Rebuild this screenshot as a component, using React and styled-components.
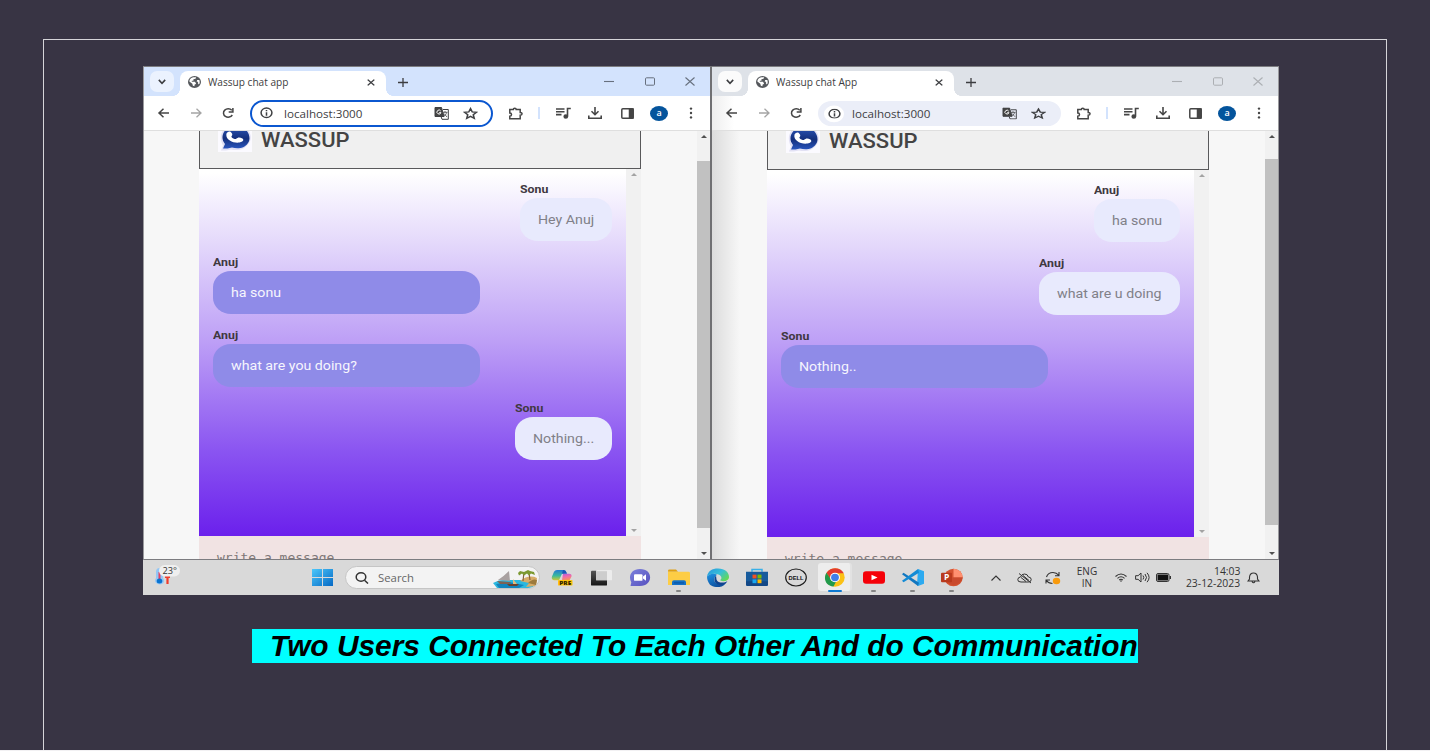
import React from 'react';
import styled, { createGlobalStyle } from 'styled-components';

const Global = createGlobalStyle`
  * { box-sizing: border-box; }
  body { margin: 0; background: #f2f1f3; overflow: hidden; }
`;

const Slide = styled.main`
  width: 1430px;
  height: 750px;
  padding: 39px 43px 0;
  background: #383444;
  overflow: hidden;
`;
const Frame = styled.section`
  height: 711px;
  border: 1px solid #d5d4d8;
  border-bottom: 0;
  padding: 26px 0 0 99px;
`;
const Desktop = styled.div`
  width: 1136px;
  height: 529px;
  display: flex;
  flex-direction: column;
`;
const Windows = styled.div`
  display: flex;
  height: 494px;
`;
const Browser = styled.section`
  width: ${p => (p.$last ? 567 : 569)}px;
  display: flex;
  flex-direction: column;
  border: 1px solid #7c7c80;
  border-left: ${p => (p.$last ? 0 : '1px solid #9a9a9d')};
  border-right: ${p => (p.$last ? '1px solid #9a9a9d' : '2px solid #707073')};
  background: #fff;
  overflow: hidden;
`;
const Label = styled.span`
  display: inline-block;
  flex: none;
  white-space: pre;
  transform: scaleX(${p => p.$sx || 1});
  transform-origin: ${p => p.$origin || 'left'} center;
`;
const TabBar = styled.div`
  height: 29px;
  flex: none;
  display: flex;
  align-items: flex-start;
  padding: 4px 0 0 6px;
  background: ${p => (p.$active ? '#d3e3fd' : '#dee2e8')};
`;
const TabSearch = styled.div`
  width: 24px;
  height: 21px;
  border-radius: 7px;
  display: flex;
  align-items: center;
  justify-content: center;
  color: #3c3d40;
  background: ${p => (p.$active ? '#ebf2fe' : '#fbfbfb')};
`;
const Tab = styled.div`
  position: relative;
  width: 206px;
  height: 25px;
  margin-left: 6px;
  padding: 0 11px 3px 8px;
  border-radius: 8px 8px 0 0;
  background: #fff;
  display: flex;
  align-items: center;
  font: 10px 'Open Sans', sans-serif;
  color: #3c3d40;
  &::before, &::after {
    content: '';
    position: absolute;
    bottom: 0;
    width: 7px;
    height: 7px;
  }
  &::before { left: -7px; background: radial-gradient(circle at 0 0, transparent 6.6px, #fff 7px); }
  &::after { right: -7px; background: radial-gradient(circle at 100% 0, transparent 6.6px, #fff 7px); }
  svg:last-child { margin-left: auto; }
`;
const TabTitle = styled(Label)` margin-left: 7px; `;
const NewTab = styled.div`
  width: 14px;
  height: 22px;
  margin-left: 12px;
  display: flex;
  align-items: center;
`;
const Controls = styled.div`
  margin-left: auto;
  height: 20px;
  padding-right: 15px;
  display: flex;
  align-items: center;
  gap: 30.5px;
  color: ${p => (p.$active ? '#67707e' : '#acafb3')};
`;
const Toolbar = styled.div`
  height: 35px;
  flex: none;
  border-bottom: 1px solid #dfdfdf;
  display: flex;
  align-items: center;
  padding-left: 12px;
  color: #454545;
  background: ${p => (p.$shade ? 'linear-gradient(90deg,#eee,#fff 22px)' : '#fff')};
`;
const Nav = styled.div`
  display: flex;
  width: 94px;
  gap: 16px;
`;
const Omnibox = styled.div`
  width: 243px;
  height: 27px;
  border-radius: 14px;
  border: 2px solid ${p => (p.$active ? '#0b57d0' : '#ebeef8')};
  background: ${p => (p.$active ? '#fff' : '#ebeef8')};
  display: flex;
  align-items: center;
  padding: 0 13px 0 4px;
  transform: ${p => (p.$active ? 'none' : 'scaleY(.93)')};
  font: 11.3px 'Open Sans', sans-serif;
  color: #3f4043;
`;
const Info = styled.div`
  width: 20px;
  height: 18px;
  border-radius: 50%;
  background: #fff;
  display: flex;
  align-items: center;
  justify-content: center;
  margin-right: 8px;
`;
const OmniActions = styled.div`
  margin-left: auto;
  display: flex;
  gap: 14px;
`;
const Tools = styled.div`
  display: flex;
  align-items: center;
  margin-left: 15px;
`;
const Divider = styled.i`
  width: 2px;
  height: 12px;
  background: #d3e3fd;
  margin: 0 16px 0 14px;
`;
const Avatar = styled.div`
  width: 18px;
  height: 15px;
  border-radius: 50%;
  background: #04549c;
  color: #fff;
  font: 600 9px/14px 'Open Sans', sans-serif;
  text-align: center;
  margin: 0 15px 0 16px;
`;
const Page = styled.div`
  flex: 1;
  min-height: 0;
  display: flex;
  background: ${p => (p.$shade ? 'linear-gradient(90deg,#dcdcdc,#f7f7f7 28px)' : '#f7f7f7')};
`;
const Phone = styled.div`
  width: 442px;
  margin-left: 55px;
  display: flex;
  flex-direction: column;
  overflow: hidden;
`;
const Header = styled.header`
  height: ${p => p.$h}px;
  flex: none;
  border: solid #59595b;
  border-width: 0 1px 1px;
  background: #f0f0f0;
  display: flex;
  align-items: flex-end;
  padding: 0 0 16px 18px;
  font: 500 20px/20px Roboto, sans-serif;
  color: #444;
`;
const Logo = styled.div`
  width: 34px;
  height: 22px;
  background: #fbfaff;
  margin-right: 9px;
  overflow: hidden;
`;
const AppName = styled(Label)` margin-bottom: 2px; `;
const Body = styled.div`
  height: 367px;
  flex: none;
  display: flex;
`;
const Chat = styled.div`
  width: 427px;
  padding: 12px 14.5px 12px 14px;
  display: flex;
  flex-direction: column;
  background: linear-gradient(#fff 1%, #e3d7fb 21%, #bd9ff6 47%, #8a54f1 77%, #6b20ec 100%);
`;
const Message = styled.div`
  align-self: ${p => (p.$own ? 'flex-end' : 'flex-start')};
  width: ${p => p.$w}px;
  margin-bottom: 13px;
`;
const Name = styled.div`
  height: 17px;
  font: 700 11.3px/17px Roboto, sans-serif;
  color: #40383f;
`;
const Bubble = styled.div`
  height: 43px;
  border-radius: 18px / 16px;
  padding-left: 18px;
  font: 12.5px/43px Roboto, sans-serif;
  background: ${p => (p.$own ? '#e8eafd' : '#8f8be8')};
  color: ${p => (p.$own ? '#808088' : '#f6f5fd')};
`;
const Scroll = styled.div`
  width: ${p => p.$w}px;
  flex: none;
  background: #f1f1f1;
  margin-left: ${p => (p.$page ? 'auto' : 0)};
  display: flex;
  flex-direction: column;
  justify-content: space-between;
  align-items: center;
  padding: 4px 0 4px;
  color: ${p => (p.$page ? '#505050' : '#a3a3a3')};
`;
const Thumb = styled.div`
  width: 100%;
  height: ${p => p.$h}px;
  background: #c1c1c1;
  margin-bottom: ${p => (p.$low ? 6 : 2)}px;
`;
const Arrow = styled.i`
  border: 3.5px solid transparent;
  border-${p => (p.$up ? 'bottom' : 'top')}: 3.5px solid currentColor;
  border-${p => (p.$up ? 'top' : 'bottom')}: 0;
`;
const Input = styled.div`
  flex: 1;
  background: #f1e3e3;
  padding: 13px 18px 0;
  font: 13px/18px 'DejaVu Sans Mono', monospace;
  color: #807878;
`;
const Taskbar = styled.footer`
  height: 35px;
  display: flex;
  align-items: center;
  background: #d9d9d9;
  font-family: 'Open Sans', sans-serif;
  color: #333;
`;
const Weather = styled.div`
  width: 28px;
  height: 30px;
  flex: none;
  margin: 0 120.5px 0 11px;
`;
const Search = styled.div`
  width: 195px;
  height: 23px;
  flex: none;
  margin: 0 2px 0 3.5px;
  border-radius: 12px;
  background: #f3f3f3;
  border: 1px solid #c5c5c5;
  display: flex;
  align-items: center;
  font-size: 10.5px;
  color: #666;
  padding-left: 9px;
  overflow: hidden;
  svg:last-child { margin-left: auto; }
`;
const SearchText = styled(Label)` margin-left: 9px; `;
const Task = styled.div`
  width: 39px;
  height: 35px;
  flex: none;
  display: flex;
  align-items: center;
  justify-content: center;
  position: relative;
  svg { position: relative; display: block; }
  &::before {
    content: '';
    display: ${p => (p.$active ? 'block' : 'none')};
    position: absolute;
    inset: 3px 2px 4px 3px;
    border-radius: 3px;
    background: #ededed;
    border-right: 2px solid #e2e2e2;
  }
  &::after {
    content: '';
    display: ${p => (p.$active || p.$open ? 'block' : 'none')};
    position: absolute;
    bottom: 3px;
    left: ${p => (p.$active ? 12.5 : 17)}px;
    width: ${p => (p.$active ? 14 : 5)}px;
    height: 2.5px;
    border-radius: 2px;
    background: ${p => (p.$active ? '#0b78d2' : '#858585')};
  }
`;
const Tray = styled.div`
  display: flex;
  align-items: center;
  margin-left: 19px;
  flex: 1;
`;
const Lang = styled.div`
  width: 24px;
  margin: 0 15px 0 14px;
  display: flex;
  flex-direction: column;
  align-items: center;
  font-size: 10px;
  line-height: 11.5px;
`;
const Clock = styled.div`
  width: 60px;
  margin: 0 7px 0 9px;
  display: flex;
  flex-direction: column;
  align-items: flex-end;
  font-size: 10px;
  line-height: 11.5px;
`;
const Caption = styled.h1`
  width: 886px;
  height: 34px;
  margin: 34px 0 0 109px;
  padding-left: 18px;
  background: #00ffff;
  color: #000;
  white-space: nowrap;
  font: italic bold 29.86px/34px 'Liberation Sans', Arial, sans-serif;
`;

const Ico = ({ w = 16, h = 14, vb = '0 0 24 24', sw = 2.4, children, $gap, ...r }) => (
  <svg width={w} height={h} viewBox={vb} preserveAspectRatio="none" fill="none" stroke="currentColor" strokeWidth={sw} {...r}>{children}</svg>
);
const TrayIcon = styled(Ico)`
  flex: none;
  margin-left: ${p => p.$gap || 0}px;
`;

const Globe = () => (
  <Ico w={13} h={12} vb="0 0 24 24" stroke="none">
    <circle cx="12" cy="12" r="12" fill="#55585c" />
    <path d="M10 2.500l5 0-1 3-4 1 0 3-3 0 0 2 6 0 2 4-3 2 0 3-3-1-1-4-5.500-4.500c0-4 3-7.500 7.500-8.500zM17 8l4 0c1 4 1 7-1 9l-2-3 1-2-3-1z" fill="#fff" />
  </Ico>
);

const WassupLogo = () => (
  <svg width="34" height="22" viewBox="0 0 34 22" display="block">
    <defs><linearGradient id="blue" x2="0" y2="1"><stop stopColor="#2c56b8" /><stop offset=".55" stopColor="#142f7c" /><stop offset="1" stopColor="#2955bd" /></linearGradient></defs>
    <path d="M3 20.500l2-5C-1 4 6-5 18-5s18 11 13 18c-4 7-12 8-18 6.500-3 1-7 1-10 1z" fill="#e2e1f4" />
    <path d="M5 18.500l2-4.500C1 7 6-4 18-4s16 12 12 17c-4 6-11 6-16 4.500-3 1-6 1-9 1z" fill="url(#blue)" />
    <path d="M8.500 3.500c1.500-2.500 4-3 5.500 0 1 2-1 2.500-.5 3.500 1 1.500 2.500 2 4.500 2 2-2 3.500-2 6.500-.5 2 2 0 3.500-3 4C15 13.500 7 9.500 8.500 3.500z" fill="#fff" />
  </svg>
);

function BrowserWindow({ title, active, last, headerH, thumbH, messages }) {
  return (
    <Browser $last={last}>
      <TabBar $active={active}>
        <TabSearch $active={active}><Ico w={8} h={6} vb="0 0 10 7" sw={2}><path d="M1 1l4 4 4-4" /></Ico></TabSearch>
        <Tab>
          <Globe />
          <TabTitle $sx={1.01}>{title}</TabTitle>
          <Ico w={8} h={7} vb="0 0 8 8" sw={1.5}><path d="M.7.7l6.600 6.600M7.300.7L.7 7.300" /></Ico>
        </Tab>
        <NewTab><Ico w={10} h={9} vb="0 0 10 9" sw={1.3} color="#3c3d40"><path d="M5 0v9M0 4.500h10" /></Ico></NewTab>
        <Controls $active={active}>
          <Ico w={10} h={9} vb="0 0 10 9" sw={1.1}><path d="M0 4.500h10" /></Ico>
          <Ico w={10} h={9} vb="0 0 10 9" sw={1}><rect x=".5" y=".8" width="9" height="7.400" rx="1" /></Ico>
          <Ico w={10} h={9} vb="0 0 10 9" sw={1.1}><path d="M.5.5l9 8M9.500.5l-9 8" /></Ico>
        </Controls>
      </TabBar>
      <Toolbar $shade={last}>
        <Nav>
          <Ico w={16} h={14} vb="0 0 16 14" sw={1.5}><path d="M13 7H3.500M7.500 2.800L3 7l4.500 4.200" /></Ico>
          <Ico w={16} h={14} vb="0 0 16 14" sw={1.3} color="#a5a5a5"><path d="M3 7h9.500M8.500 2.800L13 7l-4.500 4.200" /></Ico>
          <Ico w={16} h={14} vb="0 0 16 14" sw={1.5}><path d="M12.300 9A4.700 4.200 0 1 1 11.800 4.300M12.900 2v3.900H8.700" /></Ico>
        </Nav>
        <Omnibox $active={active}>
          <Info><Ico w={13} h={11.5} vb="0 0 24 24" sw={2.8}><circle cx="12" cy="12" r="10" /><path d="M12 11v7M12 6v3" /></Ico></Info>
          <Label $sx={1.03}>localhost:3000</Label>
          <OmniActions>
            <Ico w={15} h={13} vb="0 0 15 13" sw={1}>
              <path d="M1 .5h6.500l2.500 9H1z" fill="#454545" /><path d="M9 2.500h5.300v9.800H8L7.200 10" />
              <path d="M9 5.300h4.500M11 4v1.300M12.600 5.500c-.5 2-1.600 3-3 4M10 6.500l3 3.500" strokeWidth=".8" />
              <path d="M6.700 4a2 2 0 1 0 .2 1.600H5.200" stroke="#fff" />
            </Ico>
            <Ico w={15} h={13} vb="0 0 24 24" sw={2.5}><path d="M12 3l2.800 6.200 6.700.6-5.100 4.400 1.600 6.600L12 17.300 6 20.800l1.600-6.600-5.100-4.400 6.700-.6z" /></Ico>
          </OmniActions>
        </Omnibox>
        <Tools>
          <Ico w={16} h={13} vb="0 0 16 13" sw={1.5}><path d="M1.800 2.500H5.300C5.300.8 8.200.8 8.200 2.500h4v3c2.500 0 2.500 2.700 0 2.700v3.500H1.800V9.300c2.300 0 2.300-3.400 0-3.400z" /></Ico>
          <Divider />
          <TrayIcon w={15} h={12} vb="0 0 15 12" sw={1.6}><path d="M0 2h8.500M0 4.800h8.500M0 7.600h5.500M11.500 9.500V1.500h3.300" /><ellipse cx="9.800" cy="9.500" rx="1.600" ry="1.400" fill="#454545" /></TrayIcon>
          <TrayIcon $gap={17} w={14} h={12} vb="0 0 14 12" sw={1.6}><path d="M7 0v7.500M3.500 4.300L7 7.700l3.500-3.400M.8 8.500v2.700h12.400V8.500" /></TrayIcon>
          <TrayIcon $gap={19} w={13} h={11} vb="0 0 13 11" sw={1.5}><rect x=".8" y=".8" width="11.400" height="9.400" rx="1" /><path d="M8.500 1h3.500v9H8.500z" fill="#454545" /></TrayIcon>
          <Avatar>a</Avatar>
          <Ico w={16} h={12} vb="0 0 16 12" stroke="none" fill="#454545"><circle cx="8" cy="1.600" r="1.200" /><circle cx="8" cy="6" r="1.200" /><circle cx="8" cy="10.400" r="1.200" /></Ico>
        </Tools>
      </Toolbar>
      <Page $shade={last}>
        <Phone>
          <Header $h={headerH}><Logo><WassupLogo /></Logo><AppName $sx={1.1}>WASSUP</AppName></Header>
          <Body>
            <Chat>
              {messages.map(([who, text, own, w], i) => (
                <Message key={i} $own={own} $w={w}>
                  <Name><Label $sx={1.09}>{who}</Label></Name>
                  <Bubble $own={own}><Label $sx={1.135}>{text}</Label></Bubble>
                </Message>
              ))}
            </Chat>
            <Scroll $w={15}><Arrow $up /><Arrow /></Scroll>
          </Body>
          <Input>write a message</Input>
        </Phone>
        <Scroll $w={13} $page><Arrow $up /><Thumb $h={thumbH} $low={last} /><Arrow /></Scroll>
      </Page>
    </Browser>
  );
}

const leftMessages = [
  ['Sonu', 'Hey Anuj', true, 92],
  ['Anuj', 'ha sonu', false, 267],
  ['Anuj', 'what are you doing?', false, 267],
  ['Sonu', 'Nothing...', true, 97],
];
const rightMessages = [
  ['Anuj', 'ha sonu', true, 86],
  ['Anuj', 'what are u doing', true, 141],
  ['Sonu', 'Nothing..', false, 267],
];

const Art = ({ children, w = 22, h = 19 }) => <svg width={w} height={h} viewBox="0 0 22 20" preserveAspectRatio="none">{children}</svg>;

const Copilot = () => (
  <Art>
    <defs>
      <linearGradient id="ca" x2="0" y2="1"><stop stopColor="#2478d4" /><stop offset=".55" stopColor="#37b99e" /><stop offset="1" stopColor="#d2c832" /></linearGradient>
      <linearGradient id="cb" x2=".3" y2="1"><stop stopColor="#a45ae8" /><stop offset=".5" stopColor="#f06baa" /><stop offset="1" stopColor="#fa9b4c" /></linearGradient>
    </defs>
    <path d="M6 2h7q2 0 2.500 3L11 6 8 13H3q-3-1-2-4l2-5q1-2 3-2z" fill="url(#ca)" />
    <path d="M12 6h6q3 0 2.500 3L18 14H8l3-1z" fill="url(#cb)" /><path d="M12 2q3 0 4 4h-5z" fill="#1b55ba" />
    <rect x="7" y="12.500" width="14.500" height="6" rx="1" fill="#ffc20d" />
    <text x="8.200" y="17.500" fontFamily="Open Sans" fontWeight="800" fontSize="5.500" textLength="12" lengthAdjust="spacingAndGlyphs" fill="#302400">PRE</text>
  </Art>
);
const TaskView = () => (
  <Art><defs><linearGradient id="tv" x2="0" y2="1"><stop stopColor="#555" /><stop offset="1" stopColor="#161616" /></linearGradient></defs>
    <rect x="1" y="3" width="16" height="15.500" rx="1" fill="url(#tv)" /><rect x="6" y="2" width="16" height="11" rx="1" fill="#eee" opacity=".92" /><rect x="6" y="3.500" width="11" height="9.500" fill="#c4c4c4" opacity=".7" /></Art>
);
const TeamsChat = () => (
  <Art><defs><linearGradient id="tc" x2="1" y2="1"><stop stopColor="#7b80db" /><stop offset="1" stopColor="#5650bf" /></linearGradient></defs>
    <path d="M11 1c14 0 13 18 0 18H1.500l.8-4C-1 9 2 1 11 1z" fill="url(#tc)" /><rect x="5" y="6.500" width="8.500" height="7" rx="1" fill="#fff" /><path d="M14 9l3-2.300v6.600L14 11z" fill="#fff" /></Art>
);
const Folder = () => (
  <Art><path d="M0 4V3q0-1.500 1.500-1.500H8L10 4z" fill="#dfa014" /><path d="M0 4h20.500q1.500 0 1.500 1.500V18H0z" fill="#fdcd45" /><path d="M4 18v-3q0-2 2-2h10q2 0 2 2v3z" fill="#1471c7" /><path d="M6 15.700h10" stroke="#0a4f9a" /></Art>
);
const Edge = () => (
  <Art><defs>
    <linearGradient id="ea" y2=".7" x2="1"><stop stopColor="#2695df" /><stop offset=".55" stopColor="#36bfd8" /><stop offset="1" stopColor="#63d956" /></linearGradient>
    <linearGradient id="eb" x2=".5" y2="1"><stop stopColor="#1f94e4" /><stop offset="1" stopColor="#0d4f9e" /></linearGradient></defs>
    <path d="M0 9C1 3 5 .5 11 .5c7 0 11 4 11 9 0 4-5 5.500-9 3.500 1-1 2-2 1-4C12 5 3 5 0 9z" fill="url(#ea)" />
    <path d="M0 9c2-3 7-4 10-2-5 4-3 10 3 10 3 0 5-1 7-3-3 8-13 7-17 3.500C1 15 0 12 0 9z" fill="url(#eb)" />
    <path d="M9 8c-4 5 0 11 6 10 2-.5 4-2 5.500-4-3 2-10 2-11-2z" fill="#10448f" /></Art>
);
const Store = () => (
  <Art><path d="M6 4V1.500h10V4" fill="none" stroke="#38b0e8" strokeWidth="1.500" /><path d="M0 4h22v13q0 2-2 2H2q-2 0-2-2z" fill="#175b9c" /><path d="M0 14h22v3q0 2-2 2H2q-2 0-2-2z" fill="#134887" />
    <path d="M6.500 7h4v4h-4z" fill="#f25022" /><path d="M11.500 7h4v4h-4z" fill="#7fba00" /><path d="M6.500 12h4v4h-4z" fill="#18a8f0" /><path d="M11.500 12h4v4h-4z" fill="#ffb900" /></Art>
);
const Dell = () => (
  <Art><ellipse cx="11" cy="10" rx="10.300" ry="9" fill="none" stroke="#1d1d1d" strokeWidth="1.200" /><text x="3.500" y="12.500" fontFamily="Liberation Sans" fontWeight="700" fontSize="6.500" textLength="15" lengthAdjust="spacingAndGlyphs" fill="#111">DELL</text></Art>
);
const Chrome = () => (
  <Art><circle cx="11" cy="10" r="9.700" fill="#fbc116" /><path d="M2.500 5C7-2 17-1 19.800 5.500H11L7 12.500z" fill="#e33b2e" /><path d="M2.500 5l5 8 4.500 1.500-2.500 5C1.500 19-1 11 2.500 5z" fill="#229a4b" /><circle cx="11" cy="10" r="5" fill="#fff" /><circle cx="11" cy="10" r="3.900" fill="#3f7ee8" /></Art>
);
const YouTube = () => <Art><rect y="3.500" width="22" height="13" rx="3" fill="#f50008" /><path d="M8.500 7l6 3-6 3z" fill="#fff" /></Art>;
const Code = () => (
  <Art><path d="M16 1l6 2.500v13L16 19l-1-1z" fill="#2caaf0" /><path d="M0 6.500L1.500 5 17 15.500 16 19z" fill="#1277c0" /><path d="M0 13.500L1.500 15 17 5l-1-4z" fill="#148bd5" /></Art>
);
const PowerPoint = () => (
  <Art><circle cx="12.500" cy="10" r="9.200" fill="#d35230" /><path d="M12.500.8A9.200 9.200 0 0 1 21.700 10h-9.200z" fill="#ff9070" /><path d="M3.500 10h18.200a9.200 9.200 0 0 1-18.200 0z" fill="#c94a2d" /><rect y="5" width="11" height="10" rx="1" fill="#b93a1e" /><text x="3" y="13" fontFamily="Open Sans" fontWeight="700" fontSize="8.500" fill="#fff">P</text></Art>
);

const Beach = () => (
  <svg width="46" height="21" viewBox="0 0 46 21">
    <path d="M0 16q7-4 15-3h21l7 5-5 3H4z" fill="#2cb8df" /><path d="M3 17l13-2 15 3-5 3H6z" fill="#1184bd" />
    <path d="M5 13Q10 10 16 4l1 10z" fill="#a9a1a0" /><path d="M4 14l14 1-2 2H7z" fill="#7d6254" />
    <path d="M27 14q9-7 17-3l-1 8-10 1 3-4z" fill="#d7ac68" /><path d="M35 16q5-5 9-3l-1 5z" fill="#9c7a3c" />
    <path d="M30 14l1-9M37 13l-1-7" stroke="#87613a" strokeWidth="1.200" />
    <path d="M25 6l2-2 4 1 4-2 2 1 4 1 1 3-4-1.500-2 2-2-2-3 2-2-2-3 2z" fill="#7c9931" />
    <path d="M14 17h12l-2 2h-8z" fill="#6b412d" /><path d="M20 17v-5l4 5" fill="#e2bb7e" />
  </svg>
);

const WindowsLogo = () => (
  <svg width="21" height="17" viewBox="0 0 21 17">
    <defs><linearGradient id="wn" x2="1" y2="1"><stop stopColor="#4cc8fb" /><stop offset="1" stopColor="#0568c4" /></linearGradient></defs>
    <path d="M0 0h10v8H0zM11 0h10v8H11zM0 9h10v8H0zM11 9h10v8H11z" fill="url(#wn)" />
  </svg>
);

const tasks = [
  [Copilot], [TaskView], [TeamsChat], [Folder, 'open'], [Edge], [Store], [Dell],
  [Chrome, 'active'], [YouTube, 'open'], [Code, 'open'], [PowerPoint, 'open'],
];

export default function App() {
  return (
    <>
      <Global />
      <Slide>
        <Frame>
          <Desktop>
            <Windows>
              <BrowserWindow title="Wassup chat app" active headerH={38} thumbH={367} messages={leftMessages} />
              <BrowserWindow title="Wassup chat App" last headerH={39} thumbH={366} messages={rightMessages} />
            </Windows>
            <Taskbar>
              <Weather>
                <svg width="28" height="30" viewBox="0 0 28 30">
                  <path d="M2 9q0-4 3.500-4T9 9v6q3 5-3 6.500-7-1.500-4-6.500z" fill="#93c6f5" /><path d="M5.500 9v8" stroke="#e34162" strokeWidth="2" /><ellipse cx="5.500" cy="18" rx="2.800" ry="2.500" fill="#0873d1" />
                  <path d="M11 14h5M13.500 14v7" stroke="#ef3c2b" strokeWidth="2.200" />
                  <rect x="5" y="2" width="21" height="11.500" rx="5.700" fill="#efefef" />
                  <text x="8.500" y="11" fontFamily="Open Sans" fontSize="9" textLength="14.500" lengthAdjust="spacingAndGlyphs" fill="#333">23°</text>
                </svg>
              </Weather>
              <Task><WindowsLogo /></Task>
              <Search>
                <Ico w={14} h={12} vb="0 0 14 12" sw={1.5} color="#333"><ellipse cx="6" cy="5" rx="4.800" ry="4.200" /><path d="M9.500 8.300L13 11.500" /></Ico>
                <SearchText $sx={1.08}>Search</SearchText>
                <Beach />
              </Search>
              {tasks.map(([Icon, state], i) => (
                <Task key={i} $active={state === 'active'} $open={state === 'open'}><Icon /></Task>
              ))}
              <Tray>
                <TrayIcon w={12} h={10} vb="0 0 12 10" sw={1.1}><path d="M1.500 7.500L6 3l4.500 4.500" /></TrayIcon>
                <TrayIcon $gap={15} w={15} h={12} vb="0 0 15 12" sw={1}><path d="M4 10Q.5 10 .8 7.500 1 5.200 3.500 5q1-3 4-3 3.200 0 3.900 3 2.800.2 2.800 2.500 0 2.500-2.700 2.500zM2 1.500l12 9.500M6 3.500l6 5M4 5.500l5 4" /></TrayIcon>
                <TrayIcon $gap={13} w={16} h={14} vb="0 0 16 14" sw={1.1}><path d="M1.500 6Q3 1.500 8 1.500q3.500 0 6 3M14 1v3.700h-4M1 12.500V9h4M1.500 9.500q2 3 6 3" /><ellipse cx="11.500" cy="10" rx="3.700" ry="3.200" fill="#f89a0c" stroke="none" /></TrayIcon>
                <Lang><Label>ENG</Label><Label>IN</Label></Lang>
                <TrayIcon $gap={1} w={12} h={9} vb="0 0 12 9" sw={1.1}><path d="M.5 3.500q5.500-5 11 0M2.500 5.300q3.500-3 7 0M4.200 7q1.800-1.500 3.600 0" /><circle cx="6" cy="8" r=".8" fill="#333" stroke="none" /></TrayIcon>
                <TrayIcon $gap={8} w={15} h={11} vb="0 0 15 11" sw={1}><path d="M.6 3.700h2.500L6 1v9L3.100 7.300H.600zM8 3.500q1.500 2 0 4M10 2q3 3.500 0 7M12 .8q4.200 4.700 0 9.400" /></TrayIcon>
                <TrayIcon $gap={6} w={15} h={9} vb="0 0 15 9" sw={1}><rect x=".5" y=".5" width="12.500" height="8" rx="1.500" /><rect x="1.500" y="1.500" width="10.500" height="6" fill="#111" stroke="none" /><path d="M14.300 3v3" strokeWidth="1.400" /></TrayIcon>
                <Clock><Label $sx={1.04} $origin="right">14:03</Label><Label $sx={1.04} $origin="right">23-12-2023</Label></Clock>
                <TrayIcon w={13} h={12} vb="0 0 13 12" sw={1.1}><path d="M1 9h11L10.500 7V5Q10 1 6.500 1 3 1 2.500 5v2zM5 9.500q1.500 2.500 3 0" /></TrayIcon>
              </Tray>
            </Taskbar>
          </Desktop>
          <Caption>Two Users Connected To Each Other And do Communication</Caption>
        </Frame>
      </Slide>
    </>
  );
}
